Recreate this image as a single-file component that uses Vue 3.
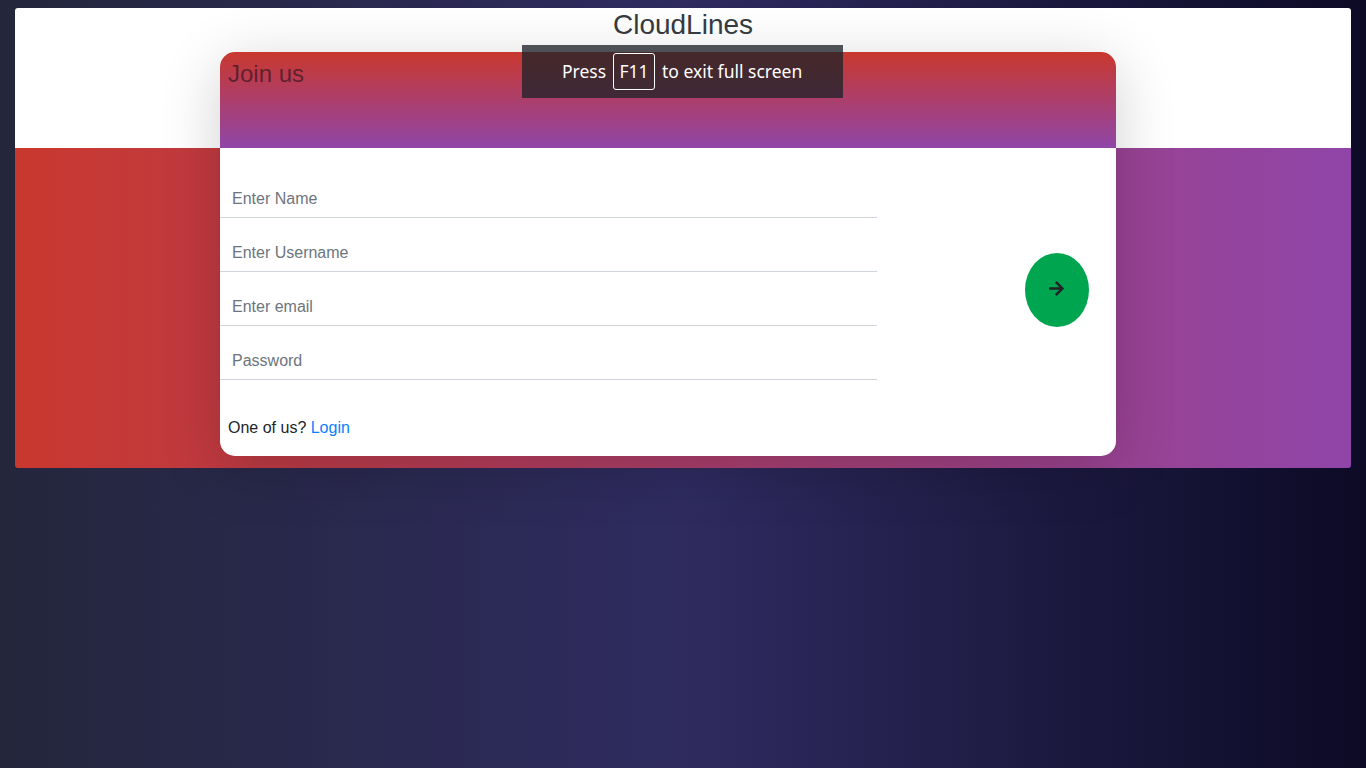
<script setup>
const fields = [
  { name: 'name', type: 'text', label: 'Enter Name' },
  { name: 'username', type: 'text', label: 'Enter Username' },
  { name: 'email', type: 'email', label: 'Enter email' },
  { name: 'password', type: 'password', label: 'Password' },
]
</script>

<template>
  <div class="page">
    <main class="panel">
      <h3 class="brand">CloudLines</h3>
      <section class="card">
        <header class="card-head"><h4 class="title">Join us</h4></header>
        <form class="form" @submit.prevent>
          <div class="fields">
            <input
              v-for="f in fields"
              :key="f.name"
              class="field"
              :name="f.name"
              :type="f.type"
              :placeholder="f.label"
            />
          </div>
          <button class="go" type="submit" aria-label="Continue">
            <svg width="15" height="17" viewBox="0 0 448 512">
              <path
                fill="currentColor"
                d="M190.500 66.900l22.200-22.200c9.400-9.400 24.600-9.400 33.900 0L441 239c9.400 9.400 9.400 24.600 0 33.900L246.600 467.300c-9.400 9.400-24.600 9.400-33.900 0l-22.200-22.200c-9.500-9.500-9.300-25 .4-34.300L311.400 296H24c-13.300 0-24-10.700-24-24v-32c0-13.300 10.700-24 24-24h287.400L190.900 101.200c-9.800-9.300-10-24.800-.4-34.300z"
              />
            </svg>
          </button>
        </form>
        <p class="login">One of us? <a class="link">Login</a></p>
      </section>
    </main>
    <div class="notice">
      <span class="press">Press</span>
      <kbd class="key">F11</kbd>
      <span class="rest">to exit full screen</span>
    </div>
  </div>
</template>

<style>
body {
  margin: 0;
  overflow: hidden;
}
</style>

<style scoped>
.page {
  box-sizing: border-box;
  position: relative;
  height: 768px;
  padding: 8px 15px;
  background: linear-gradient(to left, #0c0a25, #2f2b60 50%, #24263c);
  font-family: "Liberation Sans", Arial, sans-serif;
  font-size: 16px;
  line-height: 24px;
  color: #212529;
}
.panel {
  box-sizing: border-box;
  height: 460px;
  border-radius: 3px;
  background:
    linear-gradient(#fff, #fff) top / 100% 140px no-repeat,
    linear-gradient(to right, #c9382e, #8f45a8);
}
.brand {
  margin: 0;
  height: 44px;
  font-size: 28px;
  font-weight: 400;
  line-height: 33.6px;
  text-align: center;
  color: #343a40;
}
.card {
  width: 896px;
  height: 404px;
  margin-left: 205px;
  border-radius: 15px;
  background: #fff;
  overflow: hidden;
  box-shadow: 0 12px 60px rgba(0, 0, 0, 0.19);
}
.card-head {
  box-sizing: border-box;
  height: 96px;
  padding: 8px;
  background: linear-gradient(#c9382e, #8f45a8);
}
.title {
  margin: 0;
  font-size: 24px;
  font-weight: 400;
  line-height: 28.8px;
  color: rgba(33, 12, 25, 0.6);
}
.form {
  display: flex;
  align-items: center;
  justify-content: space-between;
  height: 252px;
  padding-right: 27px;
}
.fields {
  display: flex;
  flex-direction: column;
  gap: 16px;
  width: 657px;
  padding-top: 12px;
}
.field {
  box-sizing: border-box;
  width: 100%;
  height: 38px;
  padding: 6px 12px;
  border: 0;
  border-bottom: 1px solid #ced4da;
  outline: 0;
  background: transparent;
  font: inherit;
}
.field::placeholder {
  color: #6c757d;
  opacity: 1;
}
.go {
  width: 64px;
  height: 74px;
  margin-top: 32px;
  padding: 0 1px 3px 0;
  border: 0;
  border-radius: 50%;
  background: #00a54f;
  color: #212529;
}
.go svg {
  display: block;
  margin: 0 auto;
}
.login {
  margin: 0;
  padding: 16px 8px;
}
.link {
  color: #0a80ff;
}
.notice {
  box-sizing: border-box;
  position: absolute;
  left: 522px;
  top: 45px;
  display: flex;
  align-items: center;
  width: 321px;
  height: 53px;
  padding-left: 40px;
  background: rgba(32, 36, 41, 0.78);
  color: #fff;
  font-family: "Noto Sans", sans-serif;
  font-size: 17.500px;
  white-space: nowrap;
}
.press,
.rest {
  padding-bottom: 2px;
}
.press {
  width: 44px;
}
.key {
  box-sizing: border-box;
  width: 42px;
  height: 37px;
  margin: 0 7px;
  border: 1px solid #fff;
  border-radius: 3px;
  font: inherit;
  line-height: 35px;
  text-align: center;
}
</style>
